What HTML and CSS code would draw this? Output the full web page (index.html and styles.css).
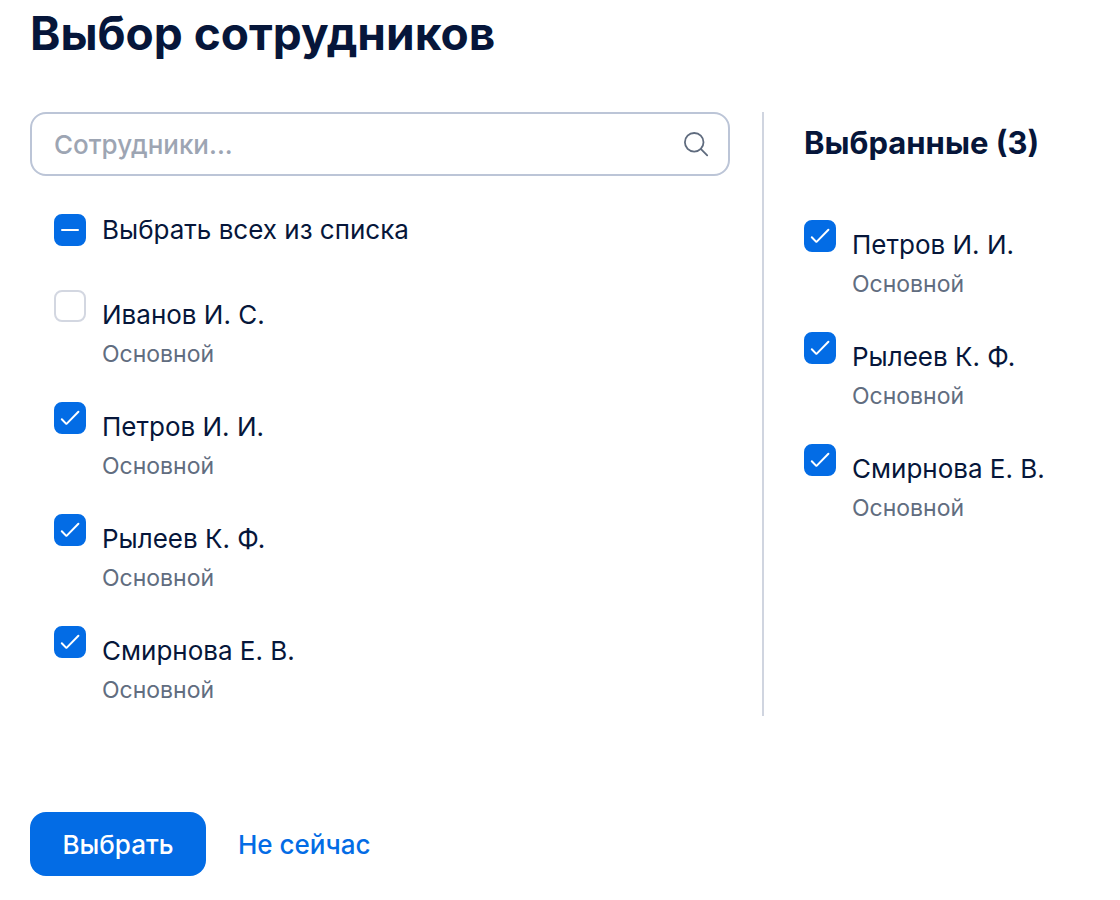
FILE: index.html
```
<!DOCTYPE html>
<html lang="ru">
<head>
<meta charset="utf-8">
<meta name="viewport" content="width=device-width, initial-scale=1">
<title>Выбор сотрудников</title>
<link rel="stylesheet" href="styles.css">
</head>
<body>
<svg width="0" height="0" class="symbols" aria-hidden="true">
  <symbol id="tick" viewBox="0 0 32 32"><path d="M7.8 17.2 12 21.6Q12.4 22 12.8 21.6L24.4 9.8" fill="none" stroke="currentColor" stroke-width="2" stroke-linecap="round" stroke-linejoin="round"/></symbol>
  <symbol id="dash" viewBox="0 0 32 32"><path d="M8 16H24" fill="none" stroke="currentColor" stroke-width="2" stroke-linecap="round"/></symbol>
</svg>
<main class="page">
  <h1 class="title">Выбор сотрудников</h1>
  <form class="picker">
    <div class="columns">
      <section class="available">
        <label class="search">
          <input class="search-input" type="text" placeholder="Сотрудники..." aria-label="Сотрудники">
          <svg class="search-icon" viewBox="0 0 32 32" aria-hidden="true"><circle cx="14.2" cy="14.3" r="9.3"/><path d="M21 21.1 27.2 27.3"/></svg>
        </label>
        <label class="all">
          <span class="check"><input type="checkbox" class="box" checked><svg class="mark" aria-hidden="true"><use href="#dash"/></svg></span>
          <span class="name">Выбрать всех из списка</span>
        </label>
        <div class="list">
          <label class="person"><span class="check"><input type="checkbox" class="box"><svg class="mark" aria-hidden="true"><use href="#tick"/></svg></span><span class="info"><span class="name">Иванов И. С.</span><span class="role">Основной</span></span></label>
          <label class="person"><span class="check"><input type="checkbox" class="box" checked><svg class="mark" aria-hidden="true"><use href="#tick"/></svg></span><span class="info"><span class="name">Петров И. И.</span><span class="role">Основной</span></span></label>
          <label class="person"><span class="check"><input type="checkbox" class="box" checked><svg class="mark" aria-hidden="true"><use href="#tick"/></svg></span><span class="info"><span class="name">Рылеев К. Ф.</span><span class="role">Основной</span></span></label>
          <label class="person"><span class="check"><input type="checkbox" class="box" checked><svg class="mark" aria-hidden="true"><use href="#tick"/></svg></span><span class="info"><span class="name">Смирнова Е. В.</span><span class="role">Основной</span></span></label>
        </div>
      </section>
      <section class="selected">
        <h2 class="subtitle">Выбранные (3)</h2>
        <div class="list">
          <label class="person"><span class="check"><input type="checkbox" class="box" checked><svg class="mark" aria-hidden="true"><use href="#tick"/></svg></span><span class="info"><span class="name">Петров И. И.</span><span class="role">Основной</span></span></label>
          <label class="person"><span class="check"><input type="checkbox" class="box" checked><svg class="mark" aria-hidden="true"><use href="#tick"/></svg></span><span class="info"><span class="name">Рылеев К. Ф.</span><span class="role">Основной</span></span></label>
          <label class="person"><span class="check"><input type="checkbox" class="box" checked><svg class="mark" aria-hidden="true"><use href="#tick"/></svg></span><span class="info"><span class="name">Смирнова Е. В.</span><span class="role">Основной</span></span></label>
        </div>
      </section>
    </div>
    <div class="actions">
      <button class="submit" type="button">Выбрать</button>
      <button class="later" type="button">Не сейчас</button>
    </div>
  </form>
</main>
</body>
</html>
```
FILE: styles.css
```
* { box-sizing: border-box; }
body {
  margin: 0;
  background: #fff;
  color: #06163a;
  font-family: Inter, "Noto Sans", sans-serif;
  font-size: 26px;
}
.symbols { position: absolute; }
.page { padding: 4px 30px 24px; }
.title { margin: 0 0 50px; font-size: 46px; line-height: 58px; font-weight: 700; }
.columns { display: grid; grid-template-columns: 700fr 328fr; gap: 32px; }
.search {
  display: flex;
  align-items: center;
  height: 64px;
  padding: 0 16px 0 22px;
  border: 2px solid #bcc5d7;
  border-radius: 16px;
}
.search-input {
  flex: 1;
  min-width: 0;
  padding: 0;
  border: 0;
  outline: 0;
  background: none;
  color: inherit;
  font: inherit;
  font-weight: 500;
}
.search-input::placeholder { color: #9da5b3; opacity: 1; }
.search-icon { width: 32px; height: 32px; fill: none; stroke: #5f6b7e; stroke-width: 1.8; stroke-linecap: round; }
.all { display: flex; gap: 16px; align-items: center; margin: 36px 24px 42px; }
.list { display: grid; gap: 28px; padding-bottom: 6px; }
.available .list { padding: 0 24px 6px; }
.person { display: flex; gap: 16px; align-items: flex-start; }
.check { display: grid; flex: none; width: 32px; height: 32px; }
.box, .mark { grid-area: 1 / 1; width: 32px; height: 32px; }
.box { appearance: none; margin: 0; border: 2px solid #d3d7e1; border-radius: 8px; background: #fff; }
.box:checked { border-color: #036ce5; background: #036ce5; }
.mark { color: #fff; pointer-events: none; }
.box:not(:checked) + .mark { visibility: hidden; }
.info { display: grid; padding-top: 6px; }
.name { line-height: 38px; }
.all .name { line-height: 36px; }
.role { line-height: 40px; font-size: 23px; color: #616d80; }
.selected { padding-left: 40px; border-left: 2px solid #d0d5e0; }
.subtitle { margin: 0 0 46px; font-size: 31px; line-height: 62px; font-weight: 700; }
.actions { display: flex; align-items: center; gap: 32px; margin-top: 96px; }
.submit, .later { height: 64px; border: 0; font: inherit; font-weight: 500; }
.submit { min-width: 176px; padding: 0 32px; border-radius: 16px; background: #036ce5; color: #fff; }
.later { padding: 0; background: none; color: #036ce5; }
```
